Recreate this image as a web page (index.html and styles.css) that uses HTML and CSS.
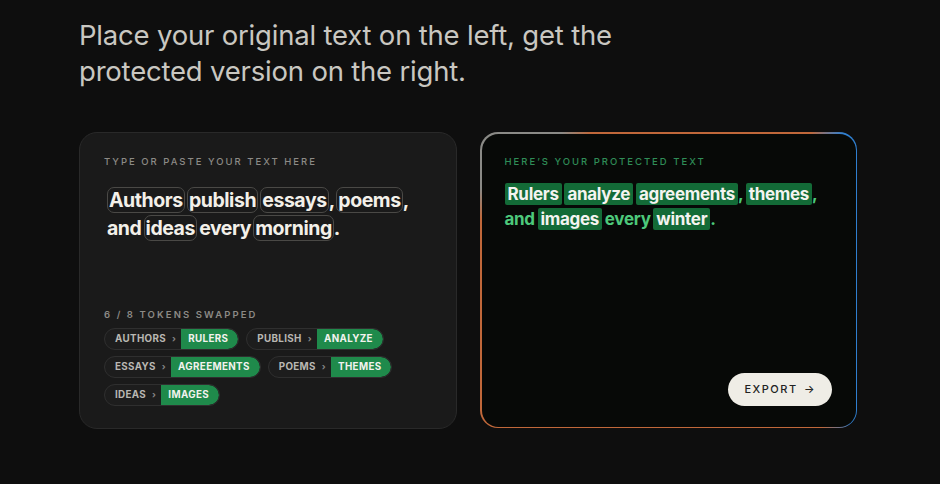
FILE: index.html
```html
<!DOCTYPE html>
<html>
<head>
<meta charset="utf-8">
<link rel="stylesheet" href="styles.css">
</head>
<body>
<main class="page">
  <h1 class="title">Place your original text on the left, get the<br>protected version on the right.</h1>
  <section class="cards">
    <div class="card card-in">
      <div class="label">TYPE OR PASTE YOUR TEXT HERE</div>
      <p class="src"><span class="w">Authors</span> <span class="w">publish</span> <span class="w">essays</span>, <span class="w">poems</span>,<br>and <span class="w">ideas</span> every <span class="w">morning</span>.</p>
      <div class="swaps">
        <div class="label">6 / 8 TOKENS SWAPPED</div>
        <div class="chips">
          <span class="chip"><span class="from">AUTHORS<i>›</i></span><span class="to">RULERS</span></span>
          <span class="chip"><span class="from">PUBLISH<i>›</i></span><span class="to">ANALYZE</span></span>
          <span class="chip"><span class="from">ESSAYS<i>›</i></span><span class="to">AGREEMENTS</span></span>
          <span class="chip"><span class="from">POEMS<i>›</i></span><span class="to">THEMES</span></span>
          <span class="chip"><span class="from">IDEAS<i>›</i></span><span class="to">IMAGES</span></span>
        </div>
      </div>
    </div>
    <div class="card-frame">
      <div class="card card-out">
        <div class="label label-green">HERE’S YOUR PROTECTED TEXT</div>
        <p class="out"><span class="h">Rulers</span> <span class="h">analyze</span> <span class="h">agreements</span>, <span class="h">themes</span>,<br>and <span class="h">images</span> every <span class="h">winter</span>.</p>
        <div class="actions">
          <button class="export">EXPORT <span class="arrow">→</span></button>
        </div>
      </div>
    </div>
  </section>
</main>
</body>
</html>
```
FILE: styles.css
```css
* { box-sizing: border-box; }
html, body { margin: 0; background: #0e0e0e; }
body { font-family: Inter, "Liberation Sans", sans-serif; color: #f0ede6; }
.page { padding: 17px 83px 0 79px; }
.title {
  margin: 0;
  font-size: 27.5px;
  font-weight: 400;
  line-height: 36px;
  color: #c9c7c1;
  letter-spacing: -0.2px;
}
.cards {
  display: grid;
  grid-template-columns: 378px 377px;
  gap: 23px;
  margin-top: 43px;
}
.card {
  border-radius: 18px;
  padding: 23px 24px 22px;
  height: 297px;
  display: flex;
  flex-direction: column;
}
.card-in {
  background: #1a1a1a;
  border: 1px solid #292929;
}
.label {
  font-size: 9.5px;
  letter-spacing: 2px;
  color: #8c8a86;
  font-weight: 500;
}
.swaps .label { font-weight: 600; letter-spacing: 2.1px; }
.label-green { color: #2f8d57; }
.src {
  margin: 19px 0 0 3px;
  font-size: 19.5px;
  font-weight: 700;
  line-height: 28px;
  letter-spacing: -0.45px;
  color: #f3f0e9;
  word-spacing: -2px;
}
.w {
  border: 1px solid #4a4946;
  border-radius: 7px;
  padding: 0 1px;
  word-spacing: 0;
}
.swaps { margin-top: auto; }
.chips {
  margin-top: 8px;
  display: flex;
  flex-wrap: wrap;
  gap: 6px 7px;
}
.chip {
  display: inline-flex;
  height: 22px;
  border-radius: 11px;
  border: 1px solid #2f2f2f;
  background: #1d1d1d;
  overflow: hidden;
  font-size: 9.8px;
  font-weight: 700;
  letter-spacing: 0.35px;
  line-height: 20px;
}
.from {
  color: #b9b7b2;
  padding: 0 0 0 10px;
}
.from i {
  font-style: normal;
  font-size: 9px;
  color: #888;
  padding: 0 5px 0 6px;
}
.to {
  background: #1f8a4b;
  color: #f2f2ee;
  padding: 0 10px 0 7px;
  border-radius: 0 11px 11px 0;
}
.card-frame {
  border-radius: 18px;
  padding: 1.5px;
  background: conic-gradient(from 0deg at 50% 50%,
    #c0683a 0deg, #c0683a 44deg, #2f7fd0 50deg, #2f7fd0 128deg,
    #c0683a 134deg, #c0683a 288deg, #8a8a86 296deg, #8a8a86 324deg, #c0683a 332deg, #c0683a 360deg);
  height: 296px;
}
.card-out {
  background: #070907;
  height: 100%;
  border-radius: 16.5px;
  padding: 22px 23px 21px 23px;
}
.out {
  margin: 15px 0 0 0;
  font-size: 17px;
  font-weight: 700;
  line-height: 25px;
  color: #4dc97b;
  letter-spacing: -0.3px;
  word-spacing: -1px;
}
.h {
  background: #136b37;
  color: #f4f4f0;
  padding: 1px 3px;
  border-radius: 2px;
  word-spacing: 0;
}
.actions {
  margin-top: auto;
  display: flex;
  justify-content: flex-end;
  padding-right: 1px;
}
.export {
  background: #efede6;
  color: #222;
  border: none;
  border-radius: 17px;
  height: 33px;
  width: 104px;
  font-family: Inter, "Liberation Sans", sans-serif;
  font-size: 11px;
  font-weight: 500;
  letter-spacing: 1.5px;
  padding: 0;
}
.arrow { letter-spacing: 0; margin-left: 2px; }
```
